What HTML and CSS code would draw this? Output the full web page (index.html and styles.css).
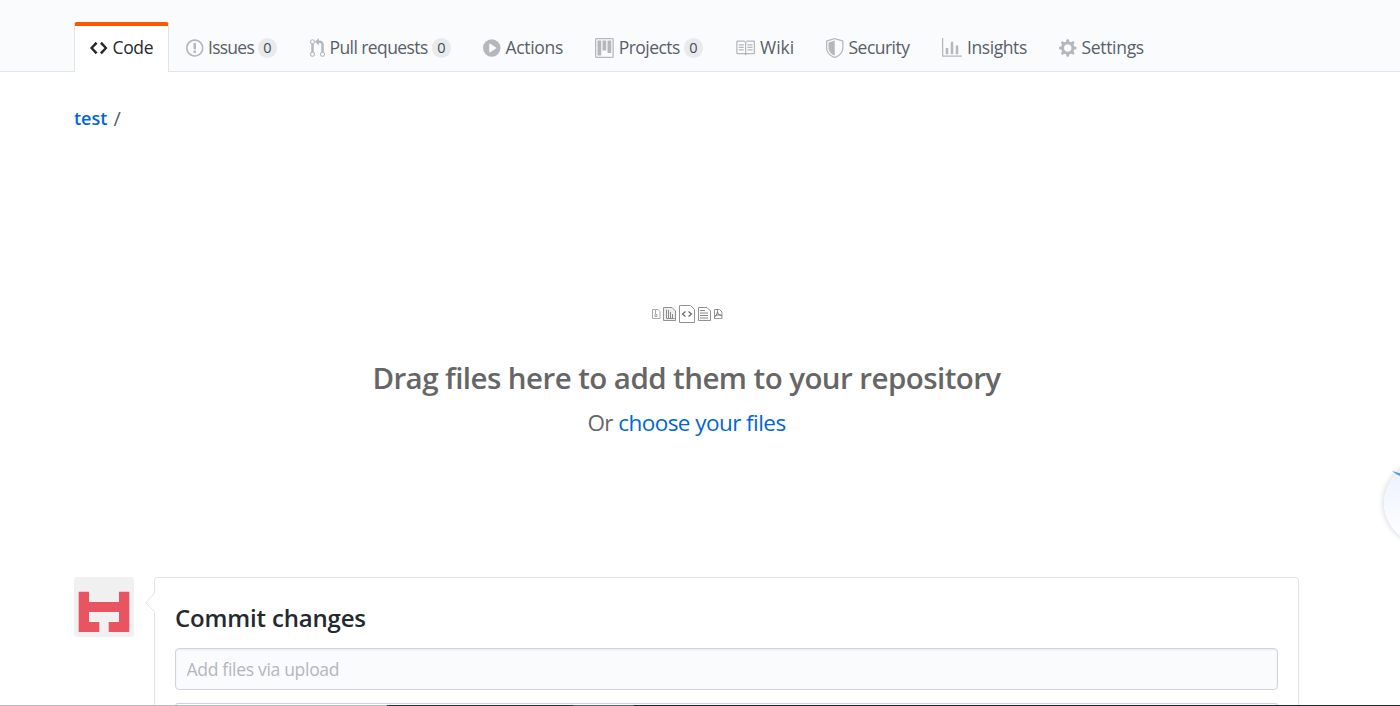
FILE: index.html
```
<!DOCTYPE html>
<html lang="en">
<head>
<meta charset="utf-8">
<title>Upload files</title>
<link rel="stylesheet" href="styles.css">
</head>
<body>
<header class="repohead">
<nav class="tabs">
<a class="tab tab-code selected"><svg width="17.5" height="20" viewBox="0 0 14 16"><path d="M9.5 3L8 4.5 11.5 8 8 11.5 9.5 13 14 8 9.5 3zm-5 0L0 8l4.5 5L6 11.5 2.5 8 6 4.5 4.5 3z"/></svg><span class="label">Code</span></a>
<a class="tab tab-issues"><svg width="17.5" height="20" viewBox="0 0 14 16"><path d="M7 2.3c3.14 0 5.7 2.56 5.7 5.7s-2.56 5.7-5.7 5.7A5.71 5.71 0 011.3 8c0-3.14 2.56-5.7 5.7-5.7zM7 1C3.14 1 0 4.14 0 8s3.14 7 7 7 7-3.14 7-7-3.14-7-7-7zm1 3H6v5h2V4zm0 6H6v2h2v-2z"/></svg><span class="label">Issues</span><span class="counter">0</span></a>
<a class="tab tab-pulls"><svg width="15" height="20" viewBox="0 0 12 16"><path d="M11 11.28V5c-.03-.78-.34-1.47-.94-2.06C9.46 2.35 8.78 2.03 8 2H7V0L4 3l3 3V4h1c.27.02.48.11.69.31.21.2.3.42.31.69v6.28A1.993 1.993 0 0010 15a1.993 1.993 0 001-3.72zm-1 2.92c-.66 0-1.2-.55-1.2-1.2 0-.65.55-1.2 1.2-1.2.65 0 1.2.55 1.2 1.2 0 .65-.55 1.2-1.2 1.2zM4 3c0-1.11-.89-2-2-2a1.993 1.993 0 00-1 3.72v6.56A1.993 1.993 0 002 15a1.993 1.993 0 001-3.72V4.72c.59-.34 1-.98 1-1.72zm-.8 10c0 .66-.55 1.2-1.2 1.2-.65 0-1.2-.55-1.2-1.2 0-.65.55-1.2 1.2-1.2.65 0 1.2.55 1.2 1.2zM2 4.2C1.34 4.2.8 3.65.8 3c0-.65.55-1.2 1.2-1.2.65 0 1.2.55 1.2 1.2 0 .65-.55 1.2-1.2 1.2z"/></svg><span class="label">Pull requests</span><span class="counter">0</span></a>
<a class="tab tab-actions"><svg width="17.5" height="20" viewBox="0 0 14 16"><path d="M14 8A7 7 0 110 8a7 7 0 0114 0zm-8.223 3.482l4.599-3.066a.5.5 0 000-.832L5.777 4.518A.5.5 0 005 4.934v6.132a.5.5 0 00.777.416z" fill-rule="evenodd"/></svg><span class="label">Actions</span></a>
<a class="tab tab-projects"><svg width="18.75" height="20" viewBox="0 0 15 16"><path d="M10 12h3V2h-3v10zm-4-2h3V2H6v8zm-4 4h3V2H2v12zm-1 1h13V1H1v14zM14 0H1a1 1 0 00-1 1v14a1 1 0 001 1h13a1 1 0 001-1V1a1 1 0 00-1-1z" fill-rule="evenodd"/></svg><span class="label">Projects</span><span class="counter">0</span></a>
<a class="tab tab-wiki"><svg width="20" height="20" viewBox="0 0 16 16"><path d="M3 5h4v1H3V5zm0 3h4V7H3v1zm0 2h4V9H3v1zm11-5h-4v1h4V5zm0 2h-4v1h4V7zm0 2h-4v1h4V9zm2-6v9c0 .55-.45 1-1 1H9.5l-1 1-1-1H2c-.55 0-1-.45-1-1V3c0-.55.45-1 1-1h5.5l1 1 1-1H15c.55 0 1 .45 1 1zm-8 .5L7.5 3H2v9h6V3.5zm7-.5H9.5l-.5.5V12h6V3z" fill-rule="evenodd"/></svg><span class="label">Wiki</span></a>
<a class="tab tab-security"><svg width="17.5" height="20" viewBox="0 0 14 16"><path d="M0 2l7-2 7 2v6.02C14 12.69 8.69 16 7 16c-1.69 0-7-3.31-7-7.98V2zm1 .75L7 1l6 1.75v5.268C13 12.104 8.449 15 7 15c-1.449 0-6-2.896-6-6.982V2.75zm1 .75L7 2v12c-1.207 0-5-2.482-5-5.985V3.5z" fill-rule="evenodd"/></svg><span class="label">Security</span></a>
<a class="tab tab-insights"><svg width="20" height="20" viewBox="0 0 16 16"><path d="M16 14v1H0V0h1v14h15zM5 13H3V8h2v5zm4 0H7V3h2v10zm4 0h-2V6h2v7z"/></svg><span class="label">Insights</span></a>
<a class="tab tab-settings"><svg width="17.5" height="20" viewBox="0 0 14 16"><path d="M14 8.77v-1.6l-1.94-.64-.45-1.09.88-1.84-1.13-1.13-1.81.91-1.09-.45-.69-1.92h-1.6l-.63 1.94-1.11.45-1.84-.88-1.13 1.13.91 1.81-.45 1.09L0 7.23v1.59l1.94.64.45 1.09-.88 1.84 1.13 1.13 1.81-.91 1.09.45.69 1.92h1.59l.63-1.94 1.11-.45 1.84.88 1.13-1.13-.92-1.81.47-1.09L14 8.75v.02zM7 11c-1.66 0-3-1.34-3-3s1.34-3 3-3 3 1.34 3 3-1.34 3-3 3z" fill-rule="evenodd"/></svg><span class="label">Settings</span></a>
</nav>
</header>
<main class="container">
<div class="breadcrumb"><a class="repo">test</a><span class="slash">/</span></div>
<section class="dropzone">
<svg class="files" width="72" height="20" viewBox="0 0 72 20" fill="none" stroke="#929292">
<path d="M1.5 5.500h5.500l2 2v7h-7.500z" stroke="#aaa"/><path d="M4.500 6v4M4 12.500h2v-2h-2z" stroke="#aaa"/>
<path d="M12.500 3.500h8.500l3.500 3.500v9.500h-12z" fill="#eee"/><path d="M15.500 5.500v9h8M17.500 6v8M19.500 8v6M21.500 10v4" stroke="#8c8c8c"/>
<path d="M28.500 1.500h11l4 4v13h-15z"/><path d="M34.500 7.500L31.500 10l3 2.500M37.500 7.500l3 2.500-3 2.500" stroke="#666" stroke-width="1.200"/>
<path d="M47.500 3.500h8.500l3.500 3.500v9.500h-12z"/><path d="M49 6.500h5M49 9h8M49 11.500h8M49 14h8" stroke="#888"/>
<path d="M63.500 5.500h5l2.500 2.500v6.500h-7.500z" stroke="#999"/><path d="M65.500 5.500c2 0 1 5-2 8M66.500 8c1 3 2 3.500 4.500 4M64 12c2-1 4-1.500 6.500-1" stroke="#777"/>
</svg>
<h1 class="drag">Drag files here to add them to your repository</h1>
<p class="choose"><span class="or">Or</span> <a class="choose-link">choose your files</a></p>
</section>
<section class="commit">
<svg class="avatar" width="60" height="60" viewBox="0 0 60 60"><rect width="60" height="60" rx="3.500" fill="#f0f0f0"/><path d="M4.700 14.700h10.300v10.300h30V14.700h10.300v40.300H34.700V45h10.300V35H15v10h10.300v10H4.700z" fill="#e85561"/></svg>
<form class="commit-box">
<svg class="pointer" width="10" height="20" viewBox="0 0 10 20"><path d="M10 0L1 9.500 10 19z" fill="#fff"/><path d="M9.500 .5L.7 9.500l8.800 9" fill="none" stroke="#e1e4e8"/></svg>
<h2 class="commit-title">Commit changes</h2>
<input class="summary" placeholder="Add files via upload">
<div class="description"></div>
</form>
</section>
</main>
<div class="float-ball"><svg width="17" height="20" viewBox="0 0 17 20"><path d="M8 9l9 2.500v3q-5-2-9-5.500z" fill="#4c9df8"/></svg></div>
<div class="edge"></div>
</body>
</html>
```
FILE: styles.css
```
* { box-sizing: border-box; }
body { margin: 0; height: 706px; overflow: hidden; position: relative; background: #fff; color: #24292e; font-family: "Open Sans", "Noto Sans", sans-serif; font-weight: 400; }
.repohead { height: 72px; padding: 22px 0 0 74px; background: #fafbfc; border-bottom: 1px solid #e1e4e8; }
.tabs { display: flex; height: 50px; }
.tab { display: flex; align-items: center; flex: none; padding: 1px 0 0 16px; color: #586069; font-size: 17.5px; white-space: nowrap; }
.tab svg { flex: none; fill: #b5b7ba; }
.label { margin: -2px 0 0 5px; line-height: 24px; }
.selected { padding: 0 0 2px 15px; background: #fff; border: 1px solid #e1e4e8; border-top: 4px solid #f95700; border-bottom: 0; border-radius: 3px 3px 0 0; color: #24292e; }
.selected svg { fill: #24292e; }
.counter { flex: none; width: 19px; height: 20px; margin-left: auto; border-radius: 10px; background: #e8eaec; color: #444d56; font-size: 14.5px; font-weight: 500; line-height: 20px; text-align: center; }
.tab-code { width: 95px; letter-spacing: -.35px; }
.tab-issues { width: 124px; padding-left: 17px; padding-right: 16px; }
.tab-pulls { width: 174px; padding-left: 16.5px; padding-right: 16px; }
.tab-projects { width: 140px; padding-right: 16px; }
.tab-issues .label { margin-left: 4.5px; letter-spacing: -.75px; }
.tab-pulls .label { letter-spacing: -.58px; }
.tab-projects .label { letter-spacing: -.55px; }
.tab-actions { width: 112px; letter-spacing: -.32px; }
.tab-wiki { width: 91px; }
.tab-security { width: 116px; letter-spacing: -.52px; }
.tab-insights { width: 117px; letter-spacing: -.42px; }
.tab-settings { width: 117px; letter-spacing: -.32px; }
.container { width: 1225px; height: 634px; margin-left: 74px; overflow: hidden; }
.breadcrumb { display: flex; gap: 6px; padding-top: 34px; height: 233px; font-size: 18px; line-height: 25px; color: #586069; }
.repo { color: #0366d6; font-weight: 600; }
.slash { font-size: 20px; }
.dropzone { height: 272px; display: flex; flex-direction: column; align-items: center; color: #666; }
.files { margin-top: -1px; }
.drag { margin: 34px 0 0; font-size: 29.5px; font-weight: 600; line-height: 40px; letter-spacing: -.56px; white-space: nowrap; }
.choose { margin: 10px 0 0; font-size: 22.5px; line-height: 30px; letter-spacing: -.56px; white-space: nowrap; }
.choose-link { color: #0366d6; }
.commit { display: flex; gap: 20px; }
.avatar { flex: none; }
.commit-box { position: relative; width: 1145px; height: 129px; padding: 21px 20px 0; border: 1px solid #e1e4e8; border-bottom: 0; border-radius: 4px 4px 0 0; }
.pointer { position: absolute; left: -10px; top: 15px; }
.commit-title { margin: 0 0 12px; font-size: 24px; font-weight: 600; line-height: 37px; letter-spacing: -.17px; }
.summary { display: block; width: 100%; height: 42px; padding: 0 10.5px; border: 1px solid #d1d5da; border-radius: 4px; background: #fafbfc; box-shadow: inset 0 1px 2px rgba(27,31,35,.075); font: 400 17.5px "Open Sans", sans-serif; letter-spacing: -.3px; }
.summary::placeholder { color: #b3b7bc; opacity: 1; }
.description { height: 3px; margin-top: 13px; border: 1px solid #d1d5da; border-bottom: 0; border-radius: 4px 4px 0 0; background: #fafbfc; }
.float-ball { position: absolute; left: 1383.5px; top: 462px; width: 82px; height: 82px; border-radius: 50%; background: linear-gradient(#eaf1ff, #fff); box-shadow: 0 0 6px rgba(0,0,0,.2); }
.edge { position: absolute; left: 0; top: 705px; width: 1400px; height: 1px; background: linear-gradient(90deg, #bdbdbd 387px, #27343a 387px 573px, #5d6668 573px 634px, #202535 634px); }
```
